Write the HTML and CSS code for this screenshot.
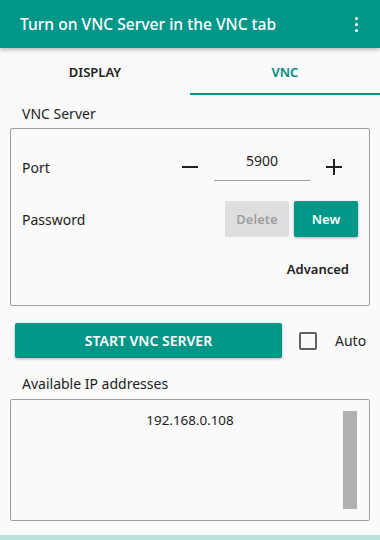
FILE: index.html
```html
<!DOCTYPE html>
<html lang="en">
<head>
    <meta charset="UTF-8">
    <meta name="viewport" content="width=device-width, initial-scale=1.0">
    <title>VNC</title>
    <link rel="stylesheet" href="styles.css">
</head>
<body>
    <div class="toolbar">
        <span class="title">Turn on VNC Server in the VNC tab</span>
        <span class="menu"><i></i><i></i><i></i></span>
    </div>

    <div class="tabs">
        <div class="tab">DISPLAY</div>
        <div class="tab active">VNC</div>
    </div>

    <div class="content">
        <div class="label">VNC Server</div>
        <div class="group">
            <div class="row port-row">
                <span>Port</span>
                <div class="stepper">
                    <span class="minus"></span>
                    <div class="port-input">5900</div>
                    <span class="plus"></span>
                </div>
            </div>
            <div class="row pw-row">
                <span>Password</span>
                <div class="btns">
                    <button class="btn disabled">Delete</button>
                    <button class="btn primary">New</button>
                </div>
            </div>
            <div class="advanced">Advanced</div>
        </div>

        <div class="start-row">
            <button class="btn primary start">START VNC SERVER</button>
            <span class="checkbox"></span>
            <span class="auto">Auto</span>
        </div>

        <div class="label">Available IP addresses</div>
        <div class="ip-box">
            <div class="ip">192.168.0.108</div>
            <div class="scrollbar"></div>
        </div>
    </div>
    <div class="bottom"></div>
</body>
</html>
```

FILE: styles.css
```css
body {
    margin: 0;
    width: 380px;
    height: 540px;
    background: #fafafa;
    font-family: "Noto Sans", sans-serif;
    color: #212121;
    display: flex;
    flex-direction: column;
    overflow: hidden;
}
.toolbar {
    height: 48px;
    flex: none;
    background: #009688;
    color: #fff;
    display: flex;
    align-items: center;
    justify-content: space-between;
    padding: 0 20px;
    box-shadow: 0 2px 4px rgba(0,0,0,0.25);
    position: relative;
    z-index: 1;
}
.title {
    font-size: 15.6px;
    font-weight: 500;
}
.menu {
    display: flex;
    flex-direction: column;
    gap: 3px;
    margin-right: 2px;
}
.menu i {
    width: 3px;
    height: 3px;
    border-radius: 50%;
    background: #fff;
}
.tabs {
    display: flex;
    height: 47px;
}
.tab {
    flex: 1;
    display: flex;
    align-items: center;
    justify-content: center;
    font-size: 13px;
    font-weight: 600;
    color: #212121;
    border-bottom: 2px solid transparent;
    padding-top: 2px;
}
.tab.active {
    color: #00897b;
    border-bottom-color: #009688;
}
.content {
    flex: 1;
    padding: 0 10px;
}
.label {
    font-size: 14px;
    padding: 9px 12px 0;
    height: 24px;
}
.group {
    border: 1px solid #9e9e9e;
    border-radius: 2px;
    height: 176px;
    padding: 0 11px;
}
.row {
    display: flex;
    align-items: center;
    justify-content: space-between;
    font-size: 14px;
}
.port-row {
    height: 56px;
    margin-top: 10px;
}
.stepper {
    display: flex;
    align-items: center;
    margin-right: 16px;
}
.minus, .plus {
    width: 16px;
    height: 16px;
    position: relative;
}
.minus::before, .plus::before, .plus::after {
    content: "";
    position: absolute;
    background: #212121;
    left: 0;
    top: 7px;
    width: 16px;
    height: 2px;
}
.plus::after {
    left: 7px;
    top: 0;
    width: 2px;
    height: 16px;
}
.port-input {
    width: 96px;
    margin: -6px 16px 0;
    text-align: center;
    font-size: 14px;
    border-bottom: 1px solid #9e9e9e;
    padding: 3px 0 10px;
}
.pw-row {
    height: 48px;
}
.btns {
    display: flex;
    gap: 5px;
}
.btn {
    font-family: inherit;
    font-size: 13px;
    font-weight: 600;
    border: none;
    border-radius: 2px;
    height: 36px;
    padding: 0;
    width: 64px;
}
.btn.disabled {
    background: #dedede;
    color: #9e9e9e;
}
.btn.primary {
    background: #009688;
    color: #fff;
    box-shadow: 0 1px 3px rgba(0,0,0,0.3);
}
.advanced {
    text-align: right;
    font-size: 13px;
    font-weight: 600;
    padding: 17px 9px 0 0;
}
.start-row {
    display: flex;
    align-items: center;
    margin-top: 17px;
    padding-left: 5px;
    height: 35px;
}
.btn.start {
    width: 267px;
    height: 35px;
    font-size: 14px;
}
.checkbox {
    width: 14px;
    height: 14px;
    border: 2px solid #616161;
    border-radius: 2px;
    margin-left: 17px;
}
.auto {
    font-size: 14px;
    margin-left: 18px;
}
.start-row + .label {
    padding-top: 16px;
}
.ip-box {
    border: 1px solid #9e9e9e;
    border-radius: 2px;
    height: 120px;
    margin-top: 1px;
    position: relative;
}
.ip {
    text-align: center;
    font-size: 13.4px;
    padding-top: 11px;
}
.scrollbar {
    position: absolute;
    right: 12px;
    top: 11px;
    width: 14px;
    height: 98px;
    background: #b0b0b0;
}
.bottom {
    height: 5px;
    flex: none;
    background: #b9e2dc;
}
```
